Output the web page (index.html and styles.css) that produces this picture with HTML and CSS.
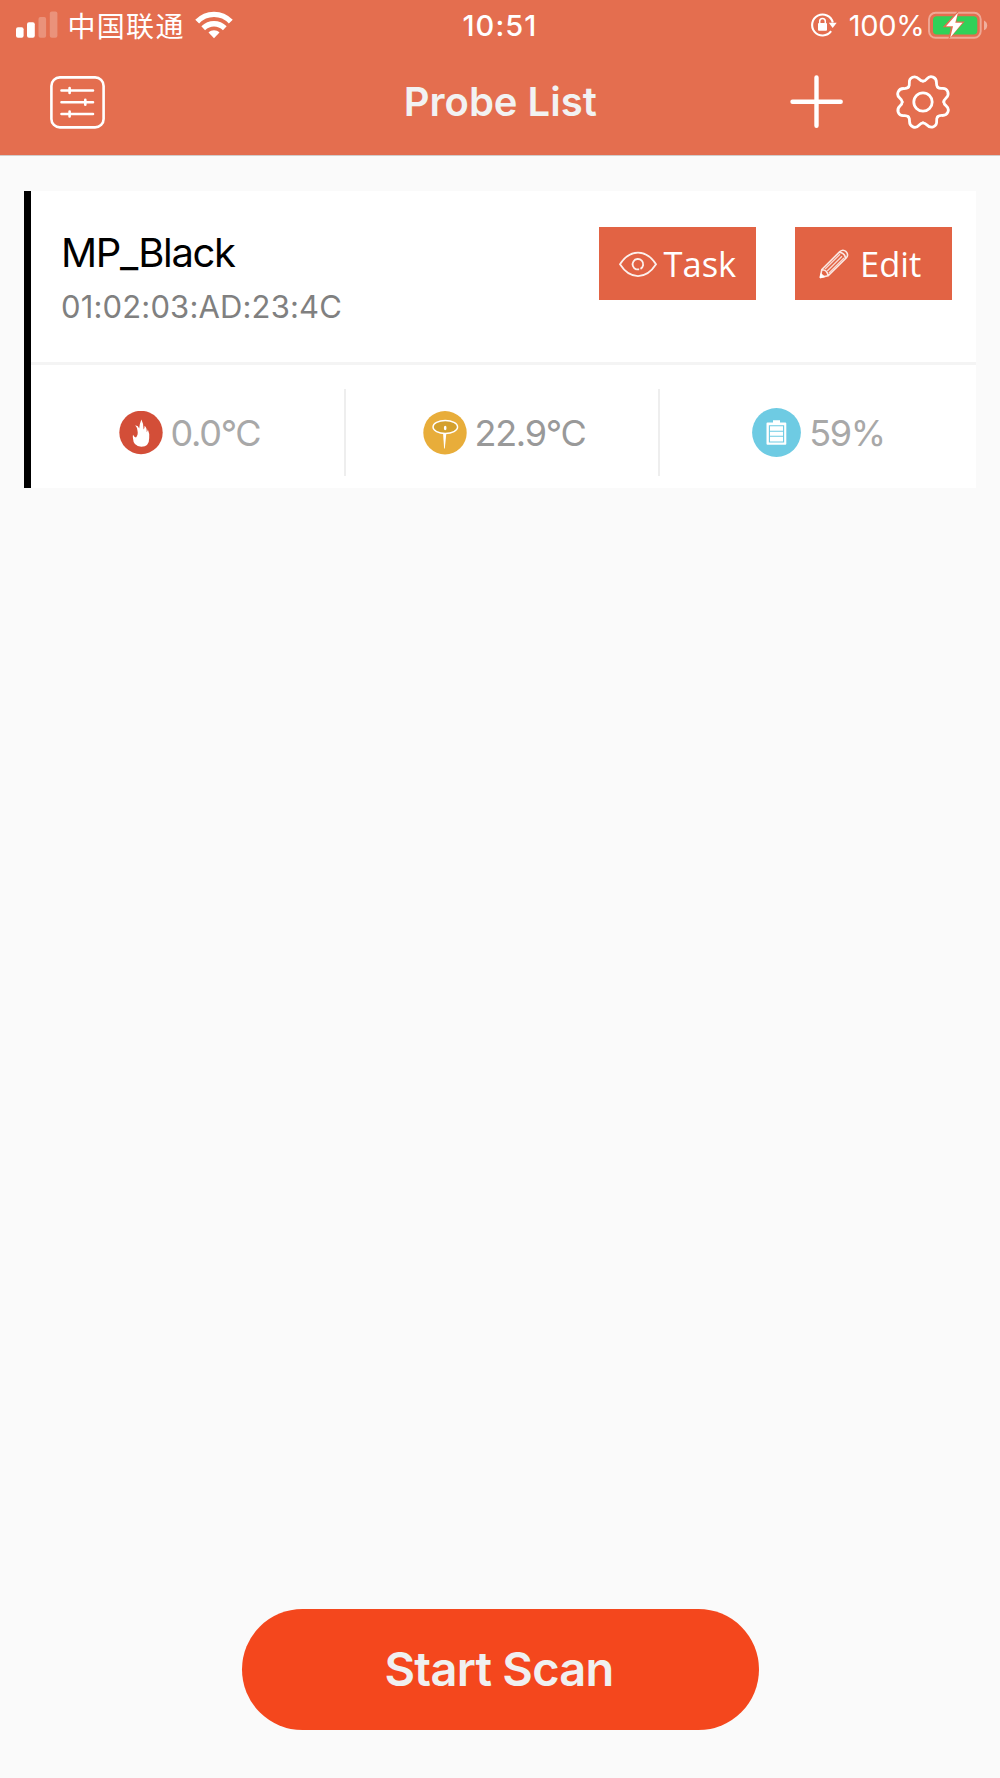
FILE: index.html
```html
<!DOCTYPE html>
<html lang="en">
<head>
<meta charset="utf-8">
<title>Probe List</title>
<link rel="stylesheet" href="styles.css">
</head>
<body>
<header class="header">
  <div class="status">
    <div class="status-left">
      <svg class="signal" width="42" height="27" viewBox="0 0 42 27" fill="#fff"><rect x="0" y="16.3" width="7.6" height="10.4" rx="2"/><rect x="11" y="11.3" width="7.8" height="15.4" rx="2"/><g opacity=".25"><rect x="22.5" y="6" width="7.6" height="20.7" rx="2"/><rect x="33.8" y="0.5" width="7.6" height="26.2" rx="2"/></g></svg>
      <span class="carrier">中国联通</span>
      <svg class="wifi" width="38" height="28" viewBox="0 0 38 28"><g fill="none" stroke="#fff" stroke-width="5.4"><path d="M2.2 10.6C11.5.9 26.5.9 35.8 10.6"/><path d="M8.2 17.2C14.5 11.2 23.5 11.2 29.8 17.2"/></g><path d="M19 27.2L13.5 21.5C16.5 18.5 21.5 18.5 24.5 21.5Z" fill="#fff"/></svg>
    </div>
    <span class="time">10:51</span>
    <div class="status-right">
      <svg class="lock" width="28" height="26" viewBox="0 0 28 26"><path d="M21.1 19.2A10.5 10.5 0 1 1 22.8 10.5" fill="none" stroke="#fff" stroke-width="2.1"/><path d="M18.8 10.7H26.7L22.7 16Z" fill="#fff"/><rect x="8" y="11" width="9" height="7.8" rx="1" fill="#fff"/><path d="M9.7 11.5V9.3a2.8 2.8 0 0 1 5.6 0V11.5" fill="none" stroke="#fff" stroke-width="1.5"/></svg>
      <span class="percent">100%</span>
      <svg class="battery" width="60" height="30" viewBox="0 0 60 30"><rect x="1" y="2.8" width="51.7" height="25" rx="6.5" fill="none" stroke="#fff" stroke-opacity=".4" stroke-width="1.9"/><path d="M56 10.5Q59.2 12 59.2 15.5T56 20.3Z" fill="#fff" opacity=".45"/><rect x="5" y="6.3" width="44.3" height="18.3" rx="3.8" fill="#30d158"/><path d="M30.5 .5L14.7 17.2H22.8L20.4 29.500L36.8 11.4H28.500Z" fill="#e46e4f"/><path d="M29.9 2.800L18 16.2H25L22.3 27.500L34.500 12.800H27.3Z" fill="#fff"/></svg>
    </div>
  </div>
  <nav class="navbar">
    <svg class="sliders" width="55" height="53" viewBox="0 0 55 53" fill="none" stroke="#fff" stroke-linecap="round"><rect x="1.4" y="1.4" width="52.2" height="50" rx="8.5" stroke-width="2.6"/><path d="M11.5 14.5H43M11.5 26.3H43M11.5 38H43M19.6 12v5M35.3 23.8v5M19.6 35.5v5" stroke-width="2.6"/></svg>
    <h1 class="title">Probe List</h1>
    <div class="actions">
      <svg width="54" height="54" viewBox="0 0 54 54" fill="none" stroke="#fff" stroke-width="4.4" stroke-linecap="round"><path d="M2.5 26.7H50.7M26.5 2.5V50.8"/></svg>
      <svg width="56" height="56" viewBox="-28 -28 56 56" fill="none" stroke="#fff" stroke-width="2.8" stroke-linecap="round"><defs><path id="tooth" d="M0-20.8C4.5-20.8 3.9-27.4 10.06-24.9C16.2-22.3 11.53-17.89 14.71-14.71"/></defs><use href="#tooth"/><use href="#tooth" transform="rotate(45)"/><use href="#tooth" transform="rotate(90)"/><use href="#tooth" transform="rotate(135)"/><use href="#tooth" transform="rotate(180)"/><use href="#tooth" transform="rotate(225)"/><use href="#tooth" transform="rotate(270)"/><use href="#tooth" transform="rotate(315)"/><circle r="9.2"/></svg>
    </div>
  </nav>
</header>
<main class="main">
  <section class="card">
    <div class="card-top">
      <div class="probe">
        <div class="name">MP_Black</div>
        <div class="mac">01:02:03:AD:23:4C</div>
      </div>
      <button class="btn task"><svg width="40" height="29" viewBox="0 -2 40 29" fill="none" stroke="#fff" stroke-opacity=".9" stroke-width="1.8"><path d="M2 13.3C12-2.300 28-2.300 38 13.3C28 29 12 29 2 13.3Z"/><path d="M18.2 18.3A5.3 5.3 0 1 1 22.5 17.9M18.2 18.3h3"/></svg><span>Task</span></button>
      <button class="btn edit"><svg width="30" height="30" viewBox="0 0 30 30" fill="none" stroke="#fff" stroke-opacity=".85" stroke-width="1.6" stroke-linejoin="round"><path d="M1.4 28.4L2.8 20.5L20.8 2.6Q24-.1 27.1 2.7Q30 5.8 27.2 9L9.2 26.7ZM3 20.7Q8.3 20.8 9 26.5M20.5 3.2Q25.8 3.8 26.5 9.2"/><path d="M6 20L21 5.2M8.2 22L23 7.2M10 24L25 9" stroke-width="1.4" stroke-opacity=".75"/><path d="M1.4 28.4L2 25L5 27.7Z" fill="#fff"/></svg><span>Edit</span></button>
    </div>
    <div class="metrics">
      <div class="metric">
        <svg width="44" height="44" viewBox="0 0 44 44"><circle cx="22" cy="21.5" r="21.7" fill="#d34e38"/><path d="M22.4 8.5Q24.8 13 24.6 18.4Q25.7 17 25.6 14.8Q28.2 17.2 27.6 21Q28.7 20.2 28.8 18.3Q30.7 22.5 30.2 27Q30.3 35.7 22.3 35.7Q14.3 35.7 13.9 26.8Q13.7 25.2 14 23.8Q15.3 26.4 17 26.4Q19.4 24 18.5 19.8Q18.2 16.4 16.2 14.3Q19.5 14.8 20.2 17.5Q20.8 12 22.4 8.5Z" fill="#fff"/></svg>
        <span class="value fire">0.0°C</span>
      </div>
      <div class="metric">
        <svg width="44" height="44" viewBox="0 0 44 44"><circle cx="22" cy="21.7" r="21.7" fill="#e8ad3a"/><ellipse cx="22.3" cy="16" rx="12.3" ry="6.5" fill="#d4a02d" stroke="#fff" stroke-width="1.4"/><path d="M20.1 22.5H23.3L21.8 37.5H21.1Z" fill="#fff"/><ellipse cx="22.2" cy="17" rx="1.3" ry="2.3" fill="#fff"/></svg>
        <span class="value temp">22.9°C</span>
      </div>
      <div class="metric charge">
        <svg width="49" height="49" viewBox="0 0 49 49"><circle cx="24.5" cy="24.5" r="24.4" fill="#6ecbe3"/><path d="M21 12.2h7v2.2h5.3q1 0 1 1v20.4q0 1-1 1H15.5q-1 0-1-1V15.4q0-1 1-1H21Z" fill="#fff"/><path d="M17.4 17.7H31.6V34H17.4ZM17.4 23.2H31.6M17.4 28.2H31.6" fill="none" stroke="#6ecbe3" stroke-width="1.1"/></svg>
        <span class="value">59%</span>
      </div>
    </div>
  </section>
  <button class="scan">Start Scan</button>
</main>
</body>
</html>
```

FILE: styles.css
```css
* { box-sizing: border-box; }
body {
  margin: 0;
  width: 1000px;
  height: 1778px;
  display: flex;
  flex-direction: column;
  background: #fafafa;
  font-family: Inter, "Liberation Sans", "Noto Sans CJK SC", sans-serif;
}
svg { display: block; flex: none; }
span, .name, .mac, .title { white-space: nowrap; }
.header {
  height: 156px;
  background: #e46e4f;
  border-bottom: 1px solid #d2ccca;
  color: #fff;
}
.status {
  height: 51px;
  display: grid;
  grid-template-columns: 1fr auto 1fr;
  align-items: center;
  padding: 0 12px 0 16px;
}
.status-left, .status-right { display: flex; align-items: center; }
.status-left { height: 49px; align-self: start; }
.status-right { justify-content: flex-end; height: 50px; align-self: start; }
.signal { margin-right: 9.5px; }
.carrier {
  font: 400 28px/40px "Noto Sans CJK SC", sans-serif;
  letter-spacing: 1.3px;
  margin-right: 10.5px;
}
.time { font-size: 29px; font-weight: 500; line-height: 51px; letter-spacing: 1.1px; margin-right: 4px; }
.percent { font-size: 29px; line-height: 51px; letter-spacing: -0.3px; margin: 0 3.5px 0 11px; }
.navbar {
  height: 102px;
  display: grid;
  grid-template-columns: 1fr auto 1fr;
  align-items: center;
  padding: 0 49.5px 0 50px;
}
.title { margin: 0; font-size: 40px; font-weight: 600; line-height: 50px; color: #f2f2f2; }
.actions { display: flex; justify-content: flex-end; align-items: center; gap: 50.5px; }
.main {
  flex: 1;
  display: flex;
  flex-direction: column;
  align-items: center;
  justify-content: space-between;
  padding: 35px 24px 48px;
}
.card {
  width: 952px;
  height: 297px;
  background: #fff;
  border-left: 7.5px solid #000;
}
.card-top {
  height: 174px;
  display: flex;
  align-items: flex-start;
  padding: 36px 24.5px 0 30px;
  border-bottom: 3px solid #f4f4f4;
}
.probe { flex: 1; }
.name { font-size: 40px; line-height: 52px; letter-spacing: -1.35px; color: #000; }
.mac { font-size: 31px; line-height: 40px; letter-spacing: 0.15px; margin-top: 8px; color: #808080; }
.btn {
  width: 157px;
  height: 73px;
  display: flex;
  align-items: center;
  border: 0;
  padding: 0;
  background: #e26344;
  color: #fff;
  font: 34.5px/50px "Open Sans", "Noto Sans", sans-serif;
}
.task { padding-left: 19px; gap: 5.5px; margin-right: 38.5px; }
.edit { padding-left: 24px; gap: 11.5px; }
.metrics { display: grid; grid-template-columns: 315px 314px 1fr; padding-top: 24px; }
.metric {
  height: 87px;
  display: flex;
  align-items: center;
  justify-content: center;
  gap: 8px;
  padding-left: 4px;
  border-right: 2px solid #eee;
}
.metric:last-child { border: 0; }
.value { font-size: 36px; font-weight: 400; line-height: 50px; letter-spacing: -1.3px; color: #a8a8a8; }
.temp { color: #999; }
.charge { padding-left: 1px; }
.scan {
  width: 517px;
  height: 121px;
  border: 0;
  border-radius: 61px;
  background: #f4471d;
  color: #f0f0f0;
  font: 600 47px/60px Inter, sans-serif;
  letter-spacing: -0.75px;
  padding: 0 8px 1px 6px;
}
```
